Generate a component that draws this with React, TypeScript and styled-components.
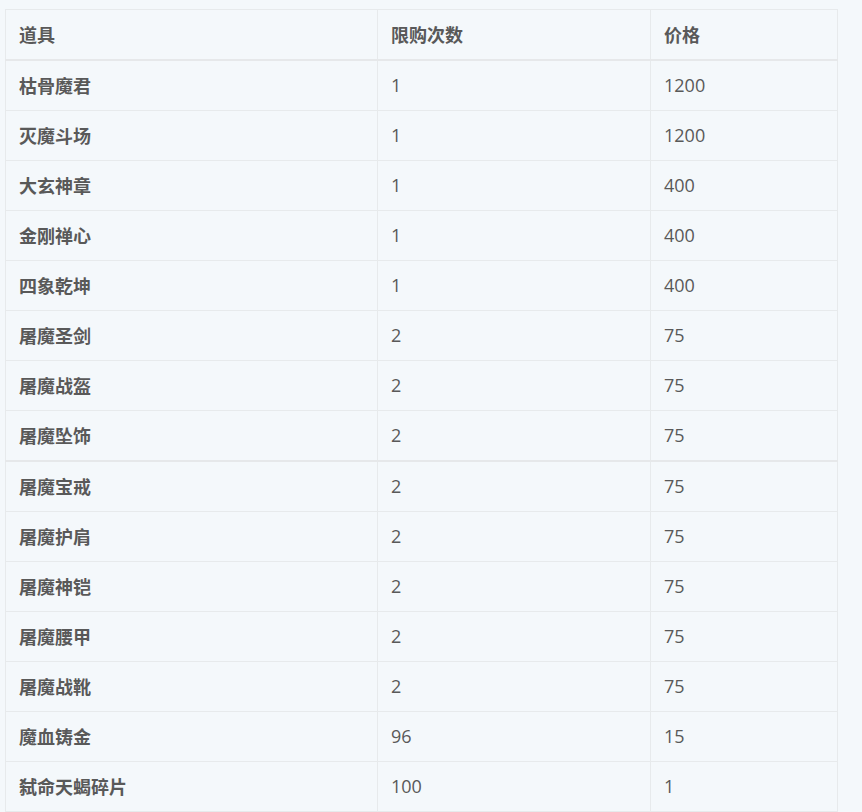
import React from "react";
import styled, { createGlobalStyle } from "styled-components";

const Global = createGlobalStyle`
  html, body {
    margin: 0;
    padding: 0;
    background: #f4f8fb;
  }
  body {
    font-family: "Open Sans", "Noto Sans CJK SC", sans-serif;
    color: #595959;
  }
`;

const Page = styled.div`
  padding: 9px 0 0 5px;
`;

const Table = styled.table`
  width: 832px;
  border-collapse: collapse;
  table-layout: fixed;
  background: #f4f8fb;
  font-size: 18px;
`;

const Row = styled.tr<{ $thick?: boolean }>`
  border-bottom: ${(p) => (p.$thick ? "2px solid #e6e8ea" : "1px solid #e7eaec")};
`;

const HeadCell = styled.th`
  height: 47px;
  padding: 0 13px 2px;
  text-align: left;
  font-weight: 700;
  border: 1px solid #e7eaec;
  border-bottom: 2px solid #e6e8ea;
  vertical-align: middle;
`;

const Cell = styled.td<{ $bold?: boolean }>`
  height: 47px;
  padding: 0 13px 2px;
  font-weight: ${(p) => (p.$bold ? 700 : 400)};
  border-left: 1px solid #e7eaec;
  border-right: 1px solid #e7eaec;
  vertical-align: middle;
`;

const rows: [string, string, string][] = [
  ["枯骨魔君", "1", "1200"],
  ["灭魔斗场", "1", "1200"],
  ["大玄神章", "1", "400"],
  ["金刚禅心", "1", "400"],
  ["四象乾坤", "1", "400"],
  ["屠魔圣剑", "2", "75"],
  ["屠魔战盔", "2", "75"],
  ["屠魔坠饰", "2", "75"],
  ["屠魔宝戒", "2", "75"],
  ["屠魔护肩", "2", "75"],
  ["屠魔神铠", "2", "75"],
  ["屠魔腰甲", "2", "75"],
  ["屠魔战靴", "2", "75"],
  ["魔血铸金", "96", "15"],
  ["弑命天蝎碎片", "100", "1"],
];

export default function App() {
  return (
    <Page>
      <Global />
      <Table>
        <colgroup>
          <col style={{ width: 372 }} />
          <col style={{ width: 273 }} />
          <col style={{ width: 187 }} />
        </colgroup>
        <thead>
          <tr>
            <HeadCell>道具</HeadCell>
            <HeadCell>限购次数</HeadCell>
            <HeadCell>价格</HeadCell>
          </tr>
        </thead>
        <tbody>
          {rows.map((r, i) => (
            <Row key={i} $thick={i === 7}>
              <Cell $bold>{r[0]}</Cell>
              <Cell>{r[1]}</Cell>
              <Cell>{r[2]}</Cell>
            </Row>
          ))}
        </tbody>
      </Table>
    </Page>
  );
}
